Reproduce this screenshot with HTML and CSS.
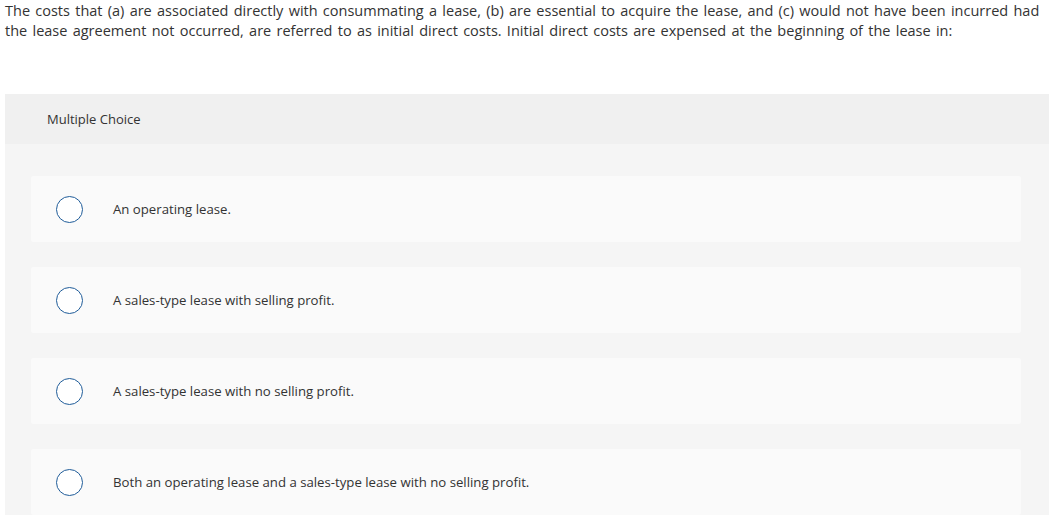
FILE: index.html
```html
<!DOCTYPE html>
<html>
<head>
<meta charset="utf-8">
<link rel="stylesheet" href="styles.css">
</head>
<body>
<p class="prompt">The costs that (a) are associated directly with consummating a lease, (b) are essential to acquire the lease, and (c) would not have been incurred had the lease agreement not occurred, are referred to as initial direct costs. Initial direct costs are expensed at the beginning of the lease in:</p>
<div class="panel">
  <div class="panel-head">Multiple Choice</div>
  <div class="panel-body">
    <div class="option"><span class="radio"></span><span class="label">An operating lease.</span></div>
    <div class="option"><span class="radio"></span><span class="label">A sales-type lease with selling profit.</span></div>
    <div class="option"><span class="radio"></span><span class="label">A sales-type lease with no selling profit.</span></div>
    <div class="option"><span class="radio"></span><span class="label">Both an operating lease and a sales-type lease with no selling profit.</span></div>
  </div>
</div>
</body>
</html>
```
FILE: styles.css
```css
html, body { margin: 0; padding: 0; background: #fff; }
body {
  font-family: "Open Sans", "Liberation Sans", sans-serif;
  color: #333;
  padding: 0 10px 0 5px;
}
.prompt {
  margin: 0;
  padding-top: 1px;
  font-size: 14.5px;
  line-height: 20px;
  word-spacing: 1.5px;
  color: #333;
}
.panel {
  margin-top: 53px;
  background: #f5f5f5;
}
.panel-head {
  background: #f0f0f0;
  height: 50px;
  padding-left: 42px;
  display: flex;
  align-items: center;
  font-size: 13px;
  color: #333;
}
.panel-body {
  padding: 32px 28px 20px 26px;
  display: flex;
  flex-direction: column;
  gap: 25px;
}
.option {
  background: #fafafa;
  height: 66px;
  display: flex;
  align-items: center;
  padding-left: 25px;
  border-radius: 2px;
}
.radio {
  width: 25px;
  height: 25px;
  border: 1.5px solid #1f5c99;
  border-radius: 50%;
  background: #fff;
  flex: none;
}
.label {
  margin-left: 30px;
  font-size: 13.2px;
  color: #333;
}
```
